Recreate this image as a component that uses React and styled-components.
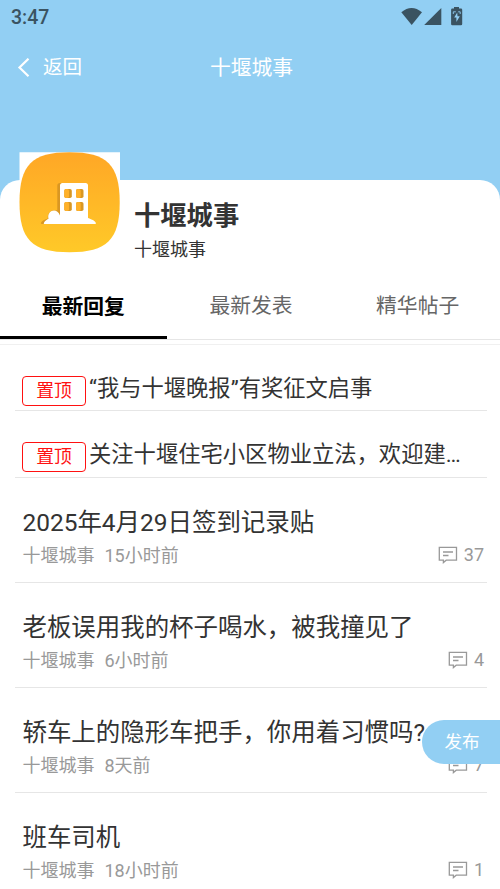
import { useState } from "react";
import styled, { createGlobalStyle } from "styled-components";

const GlobalStyle = createGlobalStyle`
  * {
    box-sizing: border-box;
  }

  body {
    margin: 0;
    background-color: #fff;
    color: #333;
    font-family: Roboto, "Noto Sans CJK SC", sans-serif;
    overflow: hidden;
  }

  h1, h2, p, ul {
    margin: 0;
    padding: 0;
    font-weight: 400;
  }

  ul {
    list-style: none;
  }

  button {
    padding: 0;
    border: none;
    background: none;
    font-family: inherit;
  }
`;

const Page = styled.div`
  height: 889px;
  overflow: hidden;
  background-color: #92cff3;
`;

const StatusBar = styled.div`
  display: flex;
  justify-content: space-between;
  height: 34px;
  padding: 0 35px 0 11px;
  color: #3a5361;
  font-size: 19.5px;
  font-weight: 500;
  line-height: 35px;
`;

const StatusIcons = styled.svg`
  width: 64px;
  height: 34px;
`;

const NavBar = styled.header`
  display: grid;
  grid-template-columns: 1fr auto 1fr;
  align-items: center;
  height: 68px;
  padding: 0 0 0 17px;
  color: #fff;
`;

const BackButton = styled.button`
  display: flex;
  align-items: center;
  gap: 12px;
  height: 30px;
  color: #fff;
  font-size: 19.5px;
  line-height: 30px;
`;

const NavTitle = styled.h1`
  margin-right: 14px;
  height: 30px;
  font-size: 20.8px;
  line-height: 30px;
`;

const Card = styled.main`
  height: 709px;
  margin-top: 78px;
  border-radius: 20px 20px 0 0;
  background-color: #fff;
`;

const Profile = styled.section`
  display: flex;
  height: 91px;
  padding-left: 19px;
`;

const Logo = styled.svg`
  width: 101px;
  height: 101px;
  margin-top: -28px;
  flex-shrink: 0;
`;

const ProfileText = styled.div`
  padding: 16px 0 0 14px;
`;

const ProfileName = styled.h2`
  height: 41px;
  font-size: 26.3px;
  font-weight: 700;
  line-height: 40px;
`;

const ProfileNote = styled.p`
  height: 26px;
  font-size: 18px;
  line-height: 26px;
`;

const Tabs = styled.nav`
  display: grid;
  grid-template-columns: repeat(3, 1fr);
  height: 69px;
  border-bottom: 1px solid #e6e6e6;
`;

const Tab = styled.button`
  height: 68px;
  padding-top: ${(props) => (props.$active ? "5px" : "4px")};
  padding-left: ${(props) => (props.$active ? "0" : "2px")};
  border-bottom: 3px solid ${(props) => (props.$active ? "#000" : "transparent")};
  color: ${(props) => (props.$active ? "#000" : "#666")};
  font-size: 20.8px;
  font-weight: ${(props) => (props.$active ? 700 : 400)};
  line-height: 62px;
`;

const List = styled.ul`
  margin-top: 4px;
  border-top: 1px solid #f0f0f0;
  padding: 0 13px 0 15px;
`;

const PinnedItem = styled.li`
  display: flex;
  align-items: flex-end;
  height: 66.5px;
  padding: 0 7px 5px;
  border-bottom: 1px solid #e6e6e6;

  &:first-child {
    height: 66px;
    padding-bottom: 4px;
  }
`;

const PinnedBadge = styled.span`
  flex-shrink: 0;
  width: 64px;
  height: 30px;
  border: 1.3px solid #f11;
  border-radius: 4px;
  color: #f11;
  font-size: 17.8px;
  line-height: 27px;
  text-align: center;
`;

const PinnedTitle = styled.span`
  height: 36px;
  margin-left: 3px;
  font-size: 22.3px;
  line-height: 37px;
  white-space: nowrap;
`;

const PostItem = styled.li`
  height: 105.1px;
  padding: 27px 0 0 7.5px;
  border-bottom: 1px solid #e6e6e6;
`;

const PostTitle = styled.h2`
  height: 36px;
  font-size: 24.45px;
  line-height: 36px;
  white-space: nowrap;
`;

const PostMeta = styled.div`
  display: flex;
  height: 30px;
  color: #999;
  font-size: 18px;
  line-height: 30px;
`;

const Author = styled.span`
  margin-right: 10px;
`;

const Replies = styled.span`
  display: flex;
  align-items: center;
  gap: 6px;
  height: 28px;
  margin: 0 3px 0 auto;
  line-height: 28px;
`;

const PublishButton = styled.button`
  position: fixed;
  top: 720px;
  right: 0;
  width: 78px;
  height: 44px;
  padding-left: 2px;
  border-radius: 22px 0 0 22px;
  background-color: #92cff3;
  color: #fff;
  font-size: 17.6px;
  line-height: 44px;
`;

const tabs = ["最新回复", "最新发表", "精华帖子"];

const pinned = [
  "“我与十堰晚报”有奖征文启事",
  "关注十堰住宅小区物业立法，欢迎建…",
];

const posts = [
  { id: 1, title: "2025年4月29日签到记录贴", time: "15小时前", replies: 37 },
  { id: 2, title: "老板误用我的杯子喝水，被我撞见了", time: "6小时前", replies: 4 },
  { id: 3, title: "轿车上的隐形车把手，你用着习惯吗?", time: "8天前", replies: 7 },
  { id: 4, title: "班车司机", time: "18小时前", replies: 1 },
];

const SystemIcons = () => (
  <StatusIcons viewBox="401 0 64 34" fill="#3a5361">
    <path d="M401.3 12.3Q411.5 3.8 422 12.3L411.7 25Z" />
    <path d="M441.3 8V25H424.2Z" />
    <path d="M454 8.5V7h5v1.5h2q1.2 0 1.2 1.2V24q0 1.2-1.2 1.2h-8.7q-1.2 0-1.2-1.2V9.7q0-1.2 1.2-1.2Z" />
    <path d="M457.2 12.5L454.2 17.5h2.2v4.5l3.4-5.8h-2.3Z" fill="#92cff3" />
    <path d="M453.3 14V11.8H455.8M458.2 11.8H460.2V14" fill="none" stroke="#92cff3" strokeWidth="0.9" />
  </StatusIcons>
);

const windows = [
  [45.3, 37],
  [57, 37],
  [45.3, 50],
  [57, 50],
];

const BuildingLogo = () => (
  <Logo viewBox="0 0 101 101">
    <defs>
      <linearGradient id="logo-bg" x1="0" y1="0" x2="0" y2="1">
        <stop offset="0" stopColor="#ffa726" />
        <stop offset="1" stopColor="#ffc928" />
      </linearGradient>
    </defs>
    <path d="M0.5 0.3H101V101H0.5Z" fill="#fff" />
    <path
      d="M50.5 0.3C88 0.3 100.7 13 100.7 50.3S88 100.3 50.5 100.3 0.5 87.6 0.5 50.3 13 0.3 50.5 0.3Z"
      fill="url(#logo-bg)"
    />
    <path
      d="M45 31H41Q38.3 31 38.3 33.5V58.6C33 57 28.5 60 28.8 66.5C25 68 22.5 69 21.8 71.2Q22 72 23 72H27L42 66Z"
      fill="#d99723"
    />
    <path
      d="M43.5 31H66.5Q69 31 69 33.5V66C73 67.5 76.5 69 77 71.2Q77 72 76 72H25.5Q24.5 72 24.8 71C26 68.8 27.5 68 29.5 66.8C27.5 58.5 38 55 41 63.5V33.5Q41 31 43.5 31Z"
      fill="#fff"
    />
    {windows.map(([x, y]) => (
      <g key={`${x}-${y}`}>
        <rect x={x} y={y} width="7.5" height="9" rx="1.8" fill="#d99723" />
        <rect x={x} y={y} width="4.7" height="9" rx="1.8" fill="#ffb129" />
      </g>
    ))}
  </Logo>
);

const CommentIcon = () => (
  <svg width="20" height="18" viewBox="0 0 20 18" fill="none" stroke="#999" strokeWidth="1.3">
    <path d="M1.3 1.4H18.5V14.2H8.2L5.4 16.5V14.2H1.3Z" />
    <path d="M5 6H15M5 9.5H10.5" />
  </svg>
);

const App = () => {
  const [active, setActive] = useState(0);

  return (
    <>
      <GlobalStyle />
      <Page>
        <StatusBar>
          <span>3:47</span>
          <SystemIcons />
        </StatusBar>
        <NavBar>
          <BackButton>
            <svg width="14" height="20" viewBox="0 0 14 20" fill="none" stroke="#fff" strokeWidth="2.2">
              <path d="M11.5 0.7L2.5 9.5L11.5 18.3" />
            </svg>
            返回
          </BackButton>
          <NavTitle>十堰城事</NavTitle>
        </NavBar>

        <Card>
          <Profile>
            <BuildingLogo />
            <ProfileText>
              <ProfileName>十堰城事</ProfileName>
              <ProfileNote>十堰城事</ProfileNote>
            </ProfileText>
          </Profile>

          <Tabs>
            {tabs.map((name, index) => (
              <Tab key={name} $active={index === active} onClick={() => setActive(index)}>
                {name}
              </Tab>
            ))}
          </Tabs>

          <List>
            {pinned.map((title) => (
              <PinnedItem key={title}>
                <PinnedBadge>置顶</PinnedBadge>
                <PinnedTitle>{title}</PinnedTitle>
              </PinnedItem>
            ))}
            {posts.map(({ id, title, time, replies }) => (
              <PostItem key={id}>
                <PostTitle>{title}</PostTitle>
                <PostMeta>
                  <Author>十堰城事</Author>
                  <span>{time}</span>
                  <Replies>
                    <CommentIcon />
                    {replies}
                  </Replies>
                </PostMeta>
              </PostItem>
            ))}
          </List>
        </Card>
        <PublishButton>发布</PublishButton>
      </Page>
    </>
  );
};

export default App;
